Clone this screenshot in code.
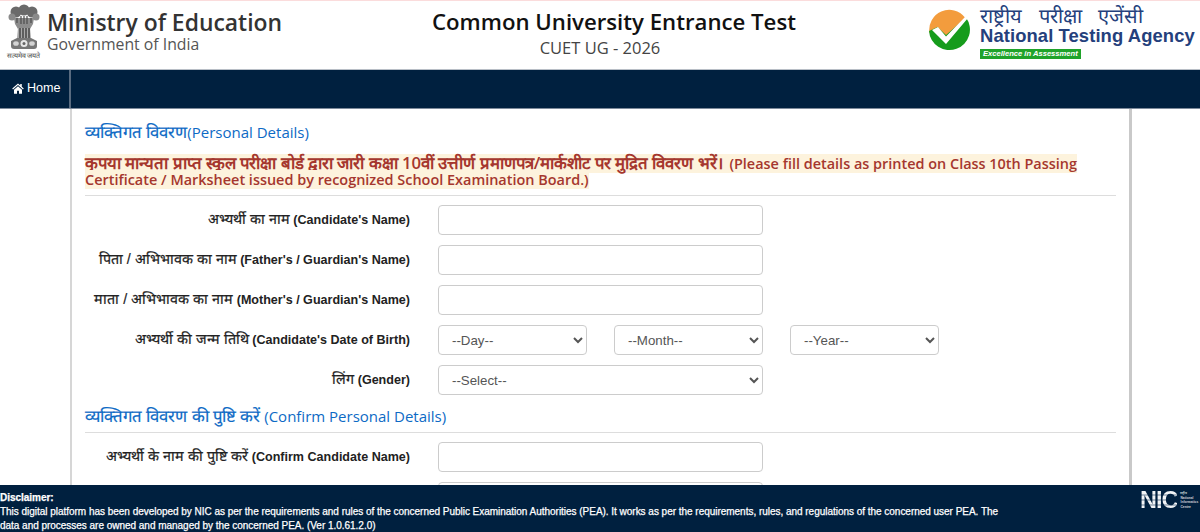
<div class="page">
  <header class="top">
    <div class="moe">
      <div class="emblem">
        <svg width="32" height="47" viewBox="0 0 32 47" aria-hidden="true">
          <g fill="#6a6a6a">
            <circle cx="16" cy="6" r="5.500" />
            <circle cx="8" cy="8" r="5.500" />
            <circle cx="24" cy="8" r="5.500" />
            <circle cx="4" cy="13" r="3.500" fill="#8a8a8a" />
            <circle cx="28" cy="13" r="3.500" fill="#8a8a8a" />
            <path d="M6 14 h20 l-1 6 l-3 5 H10 l-3-5z" fill="#8c8c8c" />
            <path d="M9 14 v5 M13 12 v8 M16 12 v8 M19 12 v8 M23 14 v5" stroke="#4d4d4d" stroke-width="1.200" fill="none" />
            <path d="M10 24 h12 l1 10 H9z" fill="#a9a9a9" />
            <path d="M12 24 v10 M15 24 v10 M18 24 v10 M21 24 v10" stroke="#3f3f3f" stroke-width="1.400" fill="none" />
            <path d="M9 34 h14 l6 3 v5 a3 3 0 0 1-3 3 H6 a3 3 0 0 1-3-3 v-5z" fill="#777" />
            <ellipse cx="16" cy="39.500" rx="3.500" ry="3.500" fill="#e8e8e8" />
            <circle cx="16" cy="39.500" r="1.500" fill="#666" />
            <ellipse cx="8" cy="39.500" rx="2.800" ry="2.300" fill="#d4d4d4" />
            <ellipse cx="24" cy="39.500" rx="2.800" ry="2.300" fill="#d4d4d4" />
          </g>
        </svg>
        <span class="motto">सत्यमेव जयते</span>
      </div>
      <div class="moe-text">
        <div class="moe-title">Ministry of Education</div>
        <div class="moe-sub">Government of India</div>
      </div>
    </div>
    <div class="center">
      <div class="exam">Common University Entrance Test</div>
      <div class="cuet">CUET UG - 2026</div>
    </div>
    <div class="nta">
      <svg width="42" height="42" viewBox="0 0 42 42" aria-hidden="true">
        <path d="M1.500 24 A20 20 0 0 1 37 8.500 L18 29 L9 19 Z" fill="#f39c3d" />
        <path d="M1 22 L9.500 18 L18 26 L38 8.500 A20.500 20.500 0 1 1 1 22 Z" fill="#169c1c" />
        <path d="M4 21 L10 18 L18 27.500 L39 6 L40 9 L18 35 Z" fill="#fff" />
      </svg>
      <div class="nta-text">
        <div class="nta-hi">राष्ट्रीय परीक्षा एजेंसी</div>
        <div class="nta-en">National Testing Agency</div>
        <div class="nta-tag">Excellence in Assessment</div>
      </div>
    </div>
  </header>

  <nav class="nav">
    <a class="home" href="#home">
      <svg width="12" height="11" viewBox="0 0 24 22" aria-hidden="true">
        <path fill="#fff" d="M12 1 L0.500 11 L2 12.800 L12 4.200 L22 12.800 L23.500 11 L19.500 7.500 V2 H16.500 V5 Z M4 13.500 V21.500 H10 V15.500 H14 V21.500 H20 V13.500 L12 6.500 Z" />
      </svg>
      Home
    </a>
  </nav>

  <main class="main">
    <div class="frame">
      <h2 class="section"><span class="hi-h">व्यक्तिगत विवरण</span>(Personal Details)</h2>
      <p class="notice"><mark><span class="hi-n">कृपया मान्यता प्राप्त स्कूल परीक्षा बोर्ड द्वारा जारी कक्षा 10वीं उत्तीर्ण प्रमाणपत्र/मार्कशीट पर मुद्रित विवरण भरें।</span> <span class="en-n">(Please fill details as printed on Class 10th Passing Certificate / Marksheet issued by recognized School Examination Board.)</span></mark></p>
      <hr />
      <div class="row">
        <label class="lbl" for="n1"><span class="hi">अभ्यर्थी का नाम</span> (Candidate's Name)</label>
        <input id="n1" class="ctl" type="text" />
      </div>
      <div class="row">
        <label class="lbl" for="n2"><span class="hi">पिता / अभिभावक का नाम</span> (Father's / Guardian's Name)</label>
        <input id="n2" class="ctl" type="text" />
      </div>
      <div class="row">
        <label class="lbl" for="n3"><span class="hi">माता / अभिभावक का नाम</span> (Mother's / Guardian's Name)</label>
        <input id="n3" class="ctl" type="text" />
      </div>
      <div class="row">
        <label class="lbl" for="d1"><span class="hi">अभ्यर्थी की जन्म तिथि</span> (Candidate's Date of Birth)</label>
        <div class="dob">
          <select id="d1" class="ctl small"><option>--Day--</option></select>
          <select class="ctl small"><option>--Month--</option></select>
          <select class="ctl small"><option>--Year--</option></select>
        </div>
      </div>
      <div class="row">
        <label class="lbl" for="g1"><span class="hi">लिंग</span> (Gender)</label>
        <select id="g1" class="ctl"><option>--Select--</option></select>
      </div>
      <h2 class="section second"><span class="hi-h">व्यक्तिगत विवरण की पुष्टि करें</span> (Confirm Personal Details)</h2>
      <hr class="second-rule" />
      <div class="row">
        <label class="lbl" for="c1"><span class="hi">अभ्यर्थी के नाम की पुष्टि करें</span> (Confirm Candidate Name)</label>
        <input id="c1" class="ctl" type="text" />
      </div>
      <div class="row">
        <label class="lbl" for="c2"><span class="hi">पिता / अभिभावक के नाम की पुष्टि करें</span></label>
        <input id="c2" class="ctl" type="text" />
      </div>
    </div>
  </main>

  <footer class="foot">
    <div class="foot-text">
      <strong>Disclaimer:</strong><br />
      This digital platform has been developed by NIC as per the requirements and rules of the concerned Public Examination Authorities (PEA). It works as per the requirements, rules, and regulations of the concerned user PEA. The data and processes are owned and managed by the concerned PEA. (Ver 1.0.61.2.0)
    </div>
    <div class="nic">
      <span class="nic-big">NIC</span>
      <span class="nic-small">राष्ट्रीय<br />National<br />Informatics<br />Centre</span>
    </div>
  </footer>
</div>

<style>
  :global(body) {
    margin: 0;
    background: #fff;
    font-family: "Liberation Sans", Arial, sans-serif;
  }
  .page {
    height: 532px;
    overflow: hidden;
    display: flex;
    flex-direction: column;
    position: relative;
  }
  .top {
    height: 68px;
    flex: none;
    border-top: 1px solid #fbdcdc;
    display: flex;
    background: #fff;
  }
  .moe {
    width: 345px;
    display: flex;
    padding: 3px 0 0 3px;
    box-sizing: border-box;
  }
  .emblem {
    width: 41px;
    display: flex;
    flex-direction: column;
    align-items: center;
  }
  .motto {
    font-size: 7px;
    line-height: 9px;
    color: #444;
    white-space: nowrap;
  }
  .moe-text {
    font-family: "Open Sans", sans-serif;
    margin-left: 3px;
    padding-top: 5px;
  }
  .moe-title {
    font-size: 22.900px;
    line-height: 27px;
    font-weight: 600;
    color: #333;
    white-space: nowrap;
  }
  .moe-sub {
    font-size: 15.800px;
    line-height: 16px;
    color: #555;
  }
  .center {
    width: 520px;
    font-family: "Open Sans", sans-serif;
    padding-top: 7px;
    box-sizing: border-box;
    text-align: center;
  }
  .exam {
    font-size: 22.200px;
    line-height: 28px;
    font-weight: 600;
    color: #111;
    padding-left: 18px;
  }
  .cuet {
    font-size: 16.500px;
    line-height: 24px;
    font-weight: 500;
    color: #444;
    padding-right: 10px;
  }
  .nta {
    flex: 1;
    display: flex;
    padding: 8px 0 0 63px;
    gap: 10px;
  }
  .nta svg {
    flex: none;
  }
  .nta-text {
    margin-top: -3px;
  }
  .nta-hi {
    font-size: 20px;
    line-height: 20px;
    color: #24407c;
    word-spacing: 11px;
    white-space: nowrap;
  }
  .nta-en {
    font-size: 18.400px;
    line-height: 20px;
    font-weight: 700;
    color: #24407c;
    white-space: nowrap;
    letter-spacing: 0.1px;
  }
  .nta-tag {
    width: max-content;
    background: #1fa32a;
    color: #fff;
    font-size: 7.600px;
    line-height: 10px;
    font-weight: 700;
    font-style: italic;
    padding: 0 3px;
    margin-top: 3px;
    white-space: nowrap;
  }
  .nav {
    height: 40px;
    flex: none;
    background: #00203f;
    box-sizing: border-box;
    border-top: 1px solid #b8bec6;
    border-bottom: 1px solid #7d8a9b;
    display: flex;
  }
  .home {
    color: #fff;
    font-size: 12.600px;
    text-decoration: none;
    display: flex;
    align-items: center;
    gap: 3px;
    width: 71px;
    box-sizing: border-box;
    padding: 0 0 2px 12px;
    border-right: 2px solid #596b80;
  }
  .main {
    flex: 1;
    min-height: 0;
    overflow: hidden;
  }
  .frame {
    margin-left: 70px;
    width: 1062px;
    box-sizing: border-box;
    border-left: 2px solid #d6d6d6;
    border-right: 3px solid #c9c9c9;
    padding: 12px 13px 0 13px;
    height: 500px;
  }
  .section {
    margin: 0;
    font-family: "Open Sans", sans-serif;
    font-weight: 400;
    font-size: 15px;
    line-height: 22px;
    color: #0d6ac5;
  }
  .hi-h {
    font-size: 16.700px;
    -webkit-text-stroke: 0.2px #0d6ac5;
  }
  .notice {
    margin: 12px 0 0;
    font-family: "Open Sans", sans-serif;
    font-weight: 600;
    font-size: 14.450px;
    line-height: 16px;
    color: #a5372e;
  }
  .hi-n {
    font-size: 16.700px;
  }
  .en-n {
    margin-left: 3px;
  }
  .notice mark {
    background: #fdf3dd;
    color: inherit;
  }
  hr {
    border: 0;
    height: 1px;
    background: #ddd;
    margin: 7px 0 9px;
  }
  .row {
    display: flex;
    height: 30px;
    margin-bottom: 10px;
    align-items: center;
  }
  .lbl {
    width: 325px;
    text-align: right;
    font-size: 12.550px;
    font-weight: 700;
    color: #222;
    white-space: nowrap;
    flex: none;
    padding-bottom: 3px;
  }
  .hi {
    font-size: 14.300px;
    font-weight: 400;
    -webkit-text-stroke: 0.2px #222;
  }
  .ctl {
    margin-left: 28px;
    width: 325px;
    height: 30px;
    box-sizing: border-box;
    border: 1px solid #ccc;
    border-radius: 4px;
    background: #fff;
    color: #555;
    font: 13.300px "Liberation Sans", Arial, sans-serif;
    padding: 0 9px;
    flex: none;
  }
  .dob {
    display: flex;
    gap: 27.500px;
    margin-left: 28px;
  }
  .small {
    margin-left: 0;
    width: 148.500px;
  }
  .second {
    margin-top: 2px;
  }
  .second-rule {
    margin: 5px 0 9px;
  }
  .foot {
    position: absolute;
    left: 0;
    right: 0;
    bottom: 0;
    height: 47px;
    background: #00203f;
    color: #fff;
    display: flex;
    font-size: 10px;
    line-height: 14px;
    box-sizing: border-box;
    padding-top: 6px;
  }
  .foot-text {
    width: 1004px;
    flex: none;
    letter-spacing: -0.025px;
    -webkit-text-stroke: 0.25px #fff;
  }
  .nic {
    margin-left: 136px;
    display: flex;
    gap: 3px;
    align-items: flex-start;
  }
  .nic-big {
    font-size: 23.500px;
    line-height: 18px;
    font-weight: 700;
    letter-spacing: -1px;
    background: repeating-linear-gradient(180deg, #f2f4f6 0 3px, #aeb9c4 3px 5px);
    -webkit-background-clip: text;
    background-clip: text;
    color: transparent;
  }
  .nic-small {
    font-size: 3.300px;
    line-height: 4.500px;
    font-weight: 700;
    color: #cfd6dd;
    white-space: nowrap;
  }
</style>
